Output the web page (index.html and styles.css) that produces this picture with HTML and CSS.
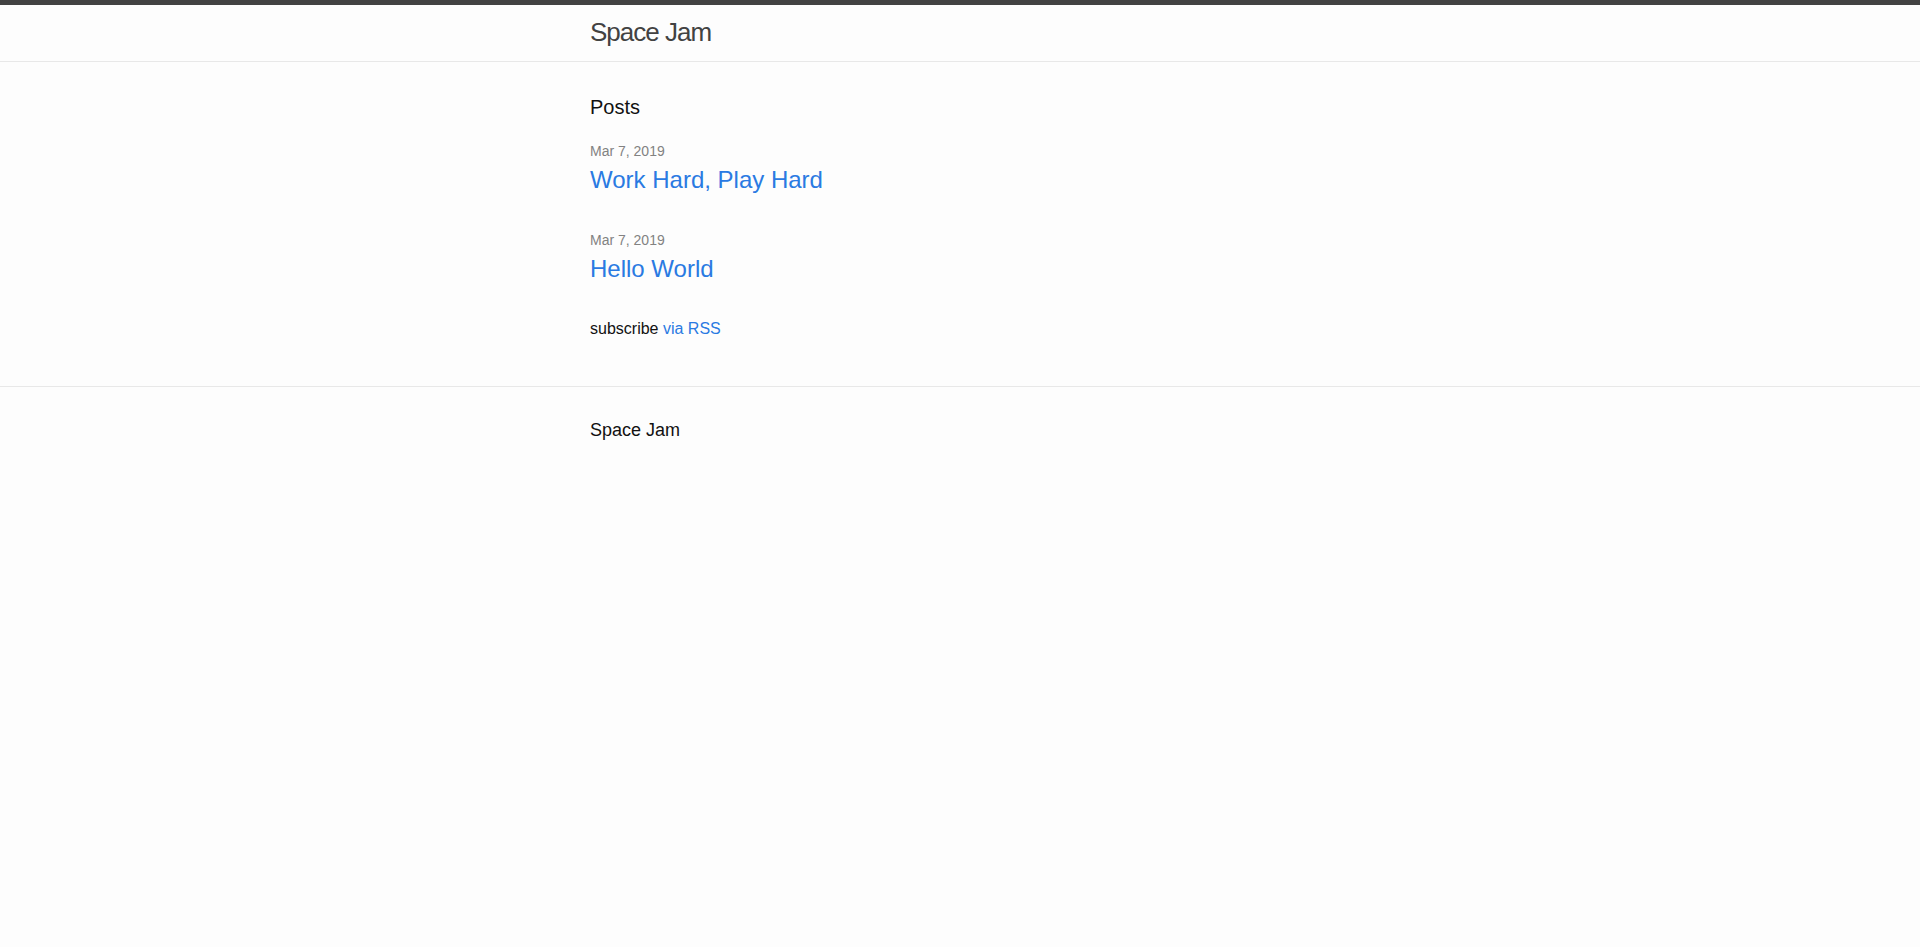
FILE: index.html
```html
<!DOCTYPE html>
<html lang="en">
<head>
<meta charset="utf-8">
<title>Space Jam</title>
<link rel="stylesheet" href="styles.css">
</head>
<body>
<header class="site-header">
  <div class="wrapper">
    <a class="site-title" href="#">Space Jam</a>
  </div>
</header>
<main class="page-content">
  <div class="wrapper">
    <h2 class="post-list-heading">Posts</h2>
    <ul class="post-list">
      <li>
        <span class="post-meta">Mar 7, 2019</span>
        <h3 class="post-title"><a class="post-link" href="#">Work Hard, Play Hard</a></h3>
      </li>
      <li>
        <span class="post-meta">Mar 7, 2019</span>
        <h3 class="post-title"><a class="post-link" href="#">Hello World</a></h3>
      </li>
    </ul>
    <p class="rss-subscribe">subscribe <a href="#">via RSS</a></p>
  </div>
</main>
<footer class="site-footer">
  <div class="wrapper">
    <h2 class="footer-heading">Space Jam</h2>
  </div>
</footer>
</body>
</html>
```
FILE: styles.css
```css
html, body {
  margin: 0;
  padding: 0;
}
body {
  font-family: "Liberation Sans", Arial, Helvetica, sans-serif;
  font-size: 16px;
  line-height: 1.5;
  color: #111111;
  background-color: #fdfdfd;
  min-height: 100vh;
  display: flex;
  flex-direction: column;
}
a {
  color: #2a7ae2;
  text-decoration: none;
}
.wrapper {
  max-width: 740px;
  margin: 0 auto;
  padding: 0 30px;
}
.site-header {
  border-top: 5px solid #424242;
  border-bottom: 1px solid #e8e8e8;
  min-height: 55.95px;
}
.site-title {
  display: block;
  font-size: 26px;
  font-weight: 300;
  line-height: 54px;
  letter-spacing: -1px;
  color: #424242;
}
.page-content {
  padding: 30px 0;
}
.post-list-heading {
  font-size: 20px;
  font-weight: 400;
  margin: 0 0 18px;
}
.post-list {
  list-style: none;
  margin: 0;
  padding: 0;
}
.post-list li {
  margin-bottom: 31px;
}
.post-meta {
  display: block;
  font-size: 14px;
  line-height: 22px;
  color: #828282;
}
.post-title {
  margin: 0;
  font-weight: 400;
  font-size: 24px;
}
.post-link {
  display: block;
  font-size: 24px;
}
.rss-subscribe {
  margin: -1px 0 15px;
}
.site-footer {
  border-top: 1px solid #e8e8e8;
  padding: 30px 0;
}
.footer-heading {
  font-size: 18px;
  font-weight: 400;
  margin: 0 0 15px;
}
```
